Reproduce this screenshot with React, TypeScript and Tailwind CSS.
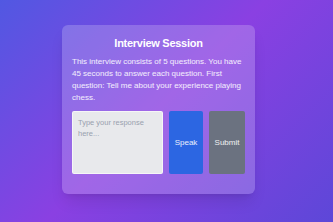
export default function App() {
  return (
    <div
      className="flex h-[222px] w-[333px] items-center justify-center bg-[linear-gradient(135deg,#5158e2_0%,#8a40e2_48%,#5d47d8_100%)] pr-4 pb-[3px]"
      style={{ fontFamily: '"Liberation Sans", Arial, sans-serif' }}
    >
      <div className="flex h-[169px] w-[193px] flex-col rounded-md bg-white/20 px-[10px] pt-[10px] shadow-lg">
        <h1 className="text-center text-[11px] font-bold leading-4 tracking-tight text-white">Interview Session</h1>
        <p className="mt-[5px] text-[8px] leading-[12px] text-white/90">
          This interview consists of 5 questions. You have 45 seconds to answer each question. First
          question: Tell me about your experience playing chess.
        </p>
        <div className="mt-[7px] flex h-[63px] gap-[6px]">
          <textarea
            placeholder="Type your response here..."
            className="h-full w-[91px] resize-none rounded-[2px] border border-white/60 bg-[#e8e9ec] px-[5px] py-[5px] text-[7.5px] leading-[11px] text-gray-700 placeholder:text-gray-400"
          />
          <button className="w-[34px] rounded-[2px] bg-[#2c66e2] text-[8px] text-white/90">Speak</button>
          <button className="w-[36px] rounded-[2px] bg-[#6b7280] text-[8px] text-white/90">Submit</button>
        </div>
      </div>
    </div>
  )
}
